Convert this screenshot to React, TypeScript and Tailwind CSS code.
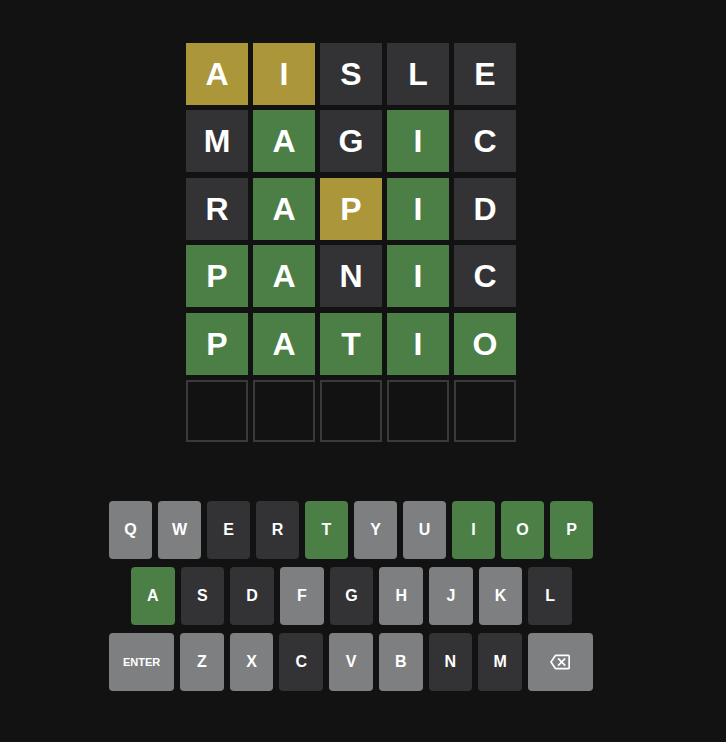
import React from 'react';

type State = 'c' | 'p' | 'a' | 'u';

const rows: { word: string; marks: string }[] = [
    { word: 'AISLE', marks: 'ppaaa' },
    { word: 'MAGIC', marks: 'acaca' },
    { word: 'RAPID', marks: 'acpca' },
    { word: 'PANIC', marks: 'ccaca' },
    { word: 'PATIO', marks: 'ccccc' },
];

const tileColor: Record<string, string> = {
    c: 'bg-[#4b7f45]',
    p: 'bg-[#ab963a]',
    a: 'bg-[#333335]',
};

const keyColor: Record<State, string> = {
    c: 'bg-[#4b7f45]',
    p: 'bg-[#ab963a]',
    a: 'bg-[#333335]',
    u: 'bg-[#7e7f81]',
};

const keyStates: Record<string, State> = {
    Q: 'u', W: 'u', E: 'a', R: 'a', T: 'c', Y: 'u', U: 'u', I: 'c', O: 'c', P: 'c',
    A: 'c', S: 'a', D: 'a', F: 'u', G: 'a', H: 'u', J: 'u', K: 'u', L: 'a',
    Z: 'u', X: 'u', C: 'a', V: 'u', B: 'u', N: 'a', M: 'a',
};

const BackspaceIcon = () => (
    <svg width="20" height="20" viewBox="0 0 24 24" fill="#ffffff">
        <path d="M22 3H7c-.69 0-1.23.35-1.59.88L0 12l5.41 8.11c.36.53.9.89 1.59.89h15c1.1 0 2-.9 2-2V5c0-1.1-.9-2-2-2zm0 16H7.07L2.4 12l4.66-7H22v14zM10.41 17L14 13.41 17.59 17 19 15.59 15.41 12 19 8.41 17.59 7 14 10.59 10.41 7 9 8.41 12.59 12 9 15.59z" />
    </svg>
);

// size: 'top' for the first row, 'mid' for rows two and three, 'wide' for enter / backspace
const Key = ({ label, size = 'mid' }: { label: string; size?: 'top' | 'mid' | 'wide' }) => {
    const state: State = keyStates[label] ?? 'u';
    const width =
        size === 'wide' ? 'w-[65px] text-[11px]' : size === 'top' ? 'w-[43px] text-[16px]' : 'w-[43.7px] text-[16px]';
    return (
        <button
            className={`h-[58px] ${width} rounded-[4px] flex items-center justify-center font-bold text-white ${keyColor[state]}`}
        >
            {label === 'BACK' ? <BackspaceIcon /> : label}
        </button>
    );
};

const App = () => {
    return (
        <div
            className="min-h-screen w-full bg-[#121213] text-white"
            style={{ fontFamily: '"Liberation Sans", Arial, sans-serif' }}
        >
            <div className="w-[702px] flex flex-col items-center pt-[43px]">
                {/* Board */}
                <div className="flex flex-col gap-y-[5.4px]">
                    {rows.map((r, i) => (
                        <div key={i} className="flex gap-[5px]">
                            {r.word.split('').map((ch, j) => (
                                <div
                                    key={j}
                                    className={`w-[62px] h-[62px] flex items-center justify-center text-[32px] font-bold leading-none ${tileColor[r.marks[j]]}`}
                                >
                                    {ch}
                                </div>
                            ))}
                        </div>
                    ))}
                    <div className="flex gap-[5px]">
                        {[0, 1, 2, 3, 4].map(j => (
                            <div key={j} className="w-[62px] h-[62px] border-2 border-[#3a3a3c]" />
                        ))}
                    </div>
                </div>

                {/* Keyboard */}
                <div className="mt-[59px] flex flex-col gap-[8px] items-center">
                    <div className="flex gap-[6px]">
                        {'QWERTYUIOP'.split('').map(k => <Key key={k} label={k} size="top" />)}
                    </div>
                    <div className="flex gap-[6px] pl-[1px]">
                        {'ASDFGHJKL'.split('').map(k => <Key key={k} label={k} />)}
                    </div>
                    <div className="flex gap-[6px]">
                        <Key label="ENTER" size="wide" />
                        {'ZXCVBNM'.split('').map(k => <Key key={k} label={k} />)}
                        <Key label="BACK" size="wide" />
                    </div>
                </div>
            </div>
        </div>
    );
};

export default App;
